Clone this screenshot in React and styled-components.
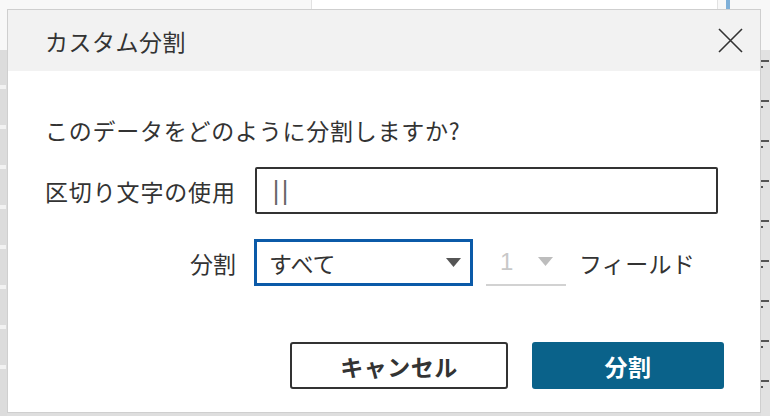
import React from "react";
import styled, { createGlobalStyle } from "styled-components";

const GlobalStyle = createGlobalStyle`
  html, body { margin: 0; padding: 0; }
  body {
    font-family: "Noto Sans CJK JP", "Noto Sans", sans-serif;
    color: #333;
  }
  * { box-sizing: border-box; }
`;

const Page = styled.div`
  position: relative;
  width: 770px;
  height: 416px;
  overflow: hidden;
  display: flex;
  flex-direction: column;
  background: #dedede;
`;

const TopBar = styled.div`
  height: 55px;
  display: flex;
  background: #f8f8f8;
`;

const TopPane = styled.div`
  width: ${(p) => p.$w}px;
  border-right: 1px solid #e2e2e2;
  background: ${(p) => p.$bg || "#f8f8f8"};
`;

const BlueMark = styled.div`
  width: 4px;
  height: 12px;
  margin-left: 8px;
  background: #7fb0d8;
`;

const Content = styled.div`
  flex: 1;
  display: flex;
  justify-content: space-between;
`;

const Strip = styled.div`
  width: ${(p) => p.$w}px;
  display: flex;
  flex-direction: column;
  gap: ${(p) => p.$gap}px;
  padding-top: ${(p) => p.$top}px;
  background: ${(p) => p.$bg};
`;

const Dash = styled.div`
  height: ${(p) => p.$h}px;
  width: ${(p) => p.$w}px;
  background: ${(p) => p.$c};
  flex-shrink: 0;
`;

const DotMark = styled.div`
  display: flex;
  flex-direction: column;
  gap: 4px;
  height: 36px;
  flex-shrink: 0;
`;

const Dialog = styled.div`
  position: absolute;
  left: 7px;
  top: 9px;
  width: 754px;
  height: 404px;
  background: #fff;
  border: 1px solid #cfcfcf;
  display: flex;
  flex-direction: column;
`;

const Header = styled.div`
  height: 61px;
  flex-shrink: 0;
  background: #f2f2f2;
  display: flex;
  align-items: center;
  justify-content: space-between;
  padding: 0 17px 0 37px;
`;

const Title = styled.div`
  font-size: 23px;
  line-height: 30px;
  letter-spacing: 0.5px;
  color: #333;
`;

const CloseButton = styled.button`
  border: 0;
  background: transparent;
  padding: 0;
  width: 26px;
  height: 26px;
  display: flex;
  align-items: center;
  justify-content: center;
  cursor: pointer;
`;

const Body = styled.div`
  flex: 1;
  display: flex;
  flex-direction: column;
  padding: 44px 36px 0 37px;
`;

const Question = styled.div`
  font-size: 23px;
  line-height: 30px;
  letter-spacing: 0.75px;
  color: #333;
`;

const FieldRow = styled.div`
  display: grid;
  grid-template-columns: 191px 1fr;
  column-gap: 18px;
  align-items: center;
  margin-top: ${(p) => p.$mt}px;
`;

const Label = styled.div`
  font-size: 23px;
  line-height: 30px;
  white-space: nowrap;
  letter-spacing: ${(p) => (p.$align === "right" ? "0" : "0.85px")};
  color: #333;
  text-align: ${(p) => p.$align || "left"};
`;

const TextInput = styled.div`
  height: 47px;
  width: 463px;
  margin-left: 1px;
  border: 2px solid #333;
  border-radius: 2px;
  display: flex;
  align-items: center;
  padding-left: 15px;
  font-family: "DejaVu Sans", sans-serif;
  font-size: 24px;
  color: #666;
  letter-spacing: 1px;
`;

const Controls = styled.div`
  display: flex;
  align-items: center;
`;

const Select = styled.div`
  width: 219px;
  height: 47px;
  border: 3px solid #0b5aa8;
  display: flex;
  align-items: center;
  justify-content: space-between;
  padding: 0 9px 0 12px;
  font-size: 23px;
  color: #333;
`;

const NumberSelect = styled.div`
  width: 80px;
  height: 47px;
  margin-left: 13px;
  border-bottom: 2px solid #d2d2d2;
  display: flex;
  align-items: center;
  padding: 0 13px 0 14px;
  justify-content: space-between;
  font-family: "Liberation Sans", sans-serif;
  font-size: 24px;
  color: #c8c8c8;
`;

const Unit = styled.div`
  margin-left: 13px;
  font-size: 23px;
  line-height: 30px;
  letter-spacing: 0.3px;
  color: #333;
`;

const Footer = styled.div`
  display: flex;
  justify-content: flex-end;
  gap: 24px;
  margin-top: 56px;
`;

const Button = styled.button`
  width: ${(p) => p.$w}px;
  height: 47px;
  border-radius: 3px;
  font-family: "Noto Sans CJK JP", sans-serif;
  font-weight: 700;
  font-size: 23px;
  letter-spacing: 0.5px;
  cursor: pointer;
  border: ${(p) => (p.$primary ? "0" : "2px solid #333")};
  background: ${(p) => (p.$primary ? "#0a628a" : "#fff")};
  color: ${(p) => (p.$primary ? "#fff" : "#333")};
`;

const Arrow = ({ color }) => (
  <svg width="15" height="9" viewBox="0 0 15 9">
    <polygon points="0,0 15,0 7.5,9" fill={color} />
  </svg>
);

const CloseIcon = () => (
  <svg width="25" height="25" viewBox="0 0 25 25">
    <path d="M1 1 L24 24 M24 1 L1 24" stroke="#333" strokeWidth="1.6" fill="none" />
  </svg>
);

const leftDashes = [0, 1, 2, 3, 4, 5, 6, 7];
const rightDots = [0, 1, 2, 3, 4, 5, 6, 7, 8];

export default function App() {
  return (
    <>
      <GlobalStyle />
      <Page>
        <TopBar>
          <TopPane $w={312} />
          <TopPane $w={406} $bg="#ffffff" />
          <BlueMark />
        </TopBar>
        <Content>
          <Strip $w={7} $gap={36} $top={35} $bg="#dcdcdc">
            {leftDashes.map((i) => (
              <Dash key={i} $h={4} $w={6} $c="#f2f2f2" />
            ))}
          </Strip>
          <Strip $w={9} $gap={4} $top={10} $bg="#e2e2e2">
            {rightDots.map((i) => (
              <DotMark key={i}>
                <Dash $h={2} $w={8} $c="#555" />
                <Dash $h={2} $w={2} $c="#555" />
              </DotMark>
            ))}
          </Strip>
        </Content>

        <Dialog>
          <Header>
            <Title>カスタム分割</Title>
            <CloseButton aria-label="閉じる">
              <CloseIcon />
            </CloseButton>
          </Header>
          <Body>
            <Question>このデータをどのように分割しますか?</Question>
            <FieldRow $mt={22}>
              <Label>区切り文字の使用</Label>
              <TextInput>||</TextInput>
            </FieldRow>
            <FieldRow $mt={25}>
              <Label $align="right">分割</Label>
              <Controls>
                <Select>
                  <span>すべて</span>
                  <Arrow color="#555" />
                </Select>
                <NumberSelect>
                  <span>1</span>
                  <Arrow color="#bdbdbd" />
                </NumberSelect>
                <Unit>フィールド</Unit>
              </Controls>
            </FieldRow>
            <Footer>
              <Button $w={218}>キャンセル</Button>
              <Button $w={192} $primary>
                分割
              </Button>
            </Footer>
          </Body>
        </Dialog>
      </Page>
    </>
  );
}
